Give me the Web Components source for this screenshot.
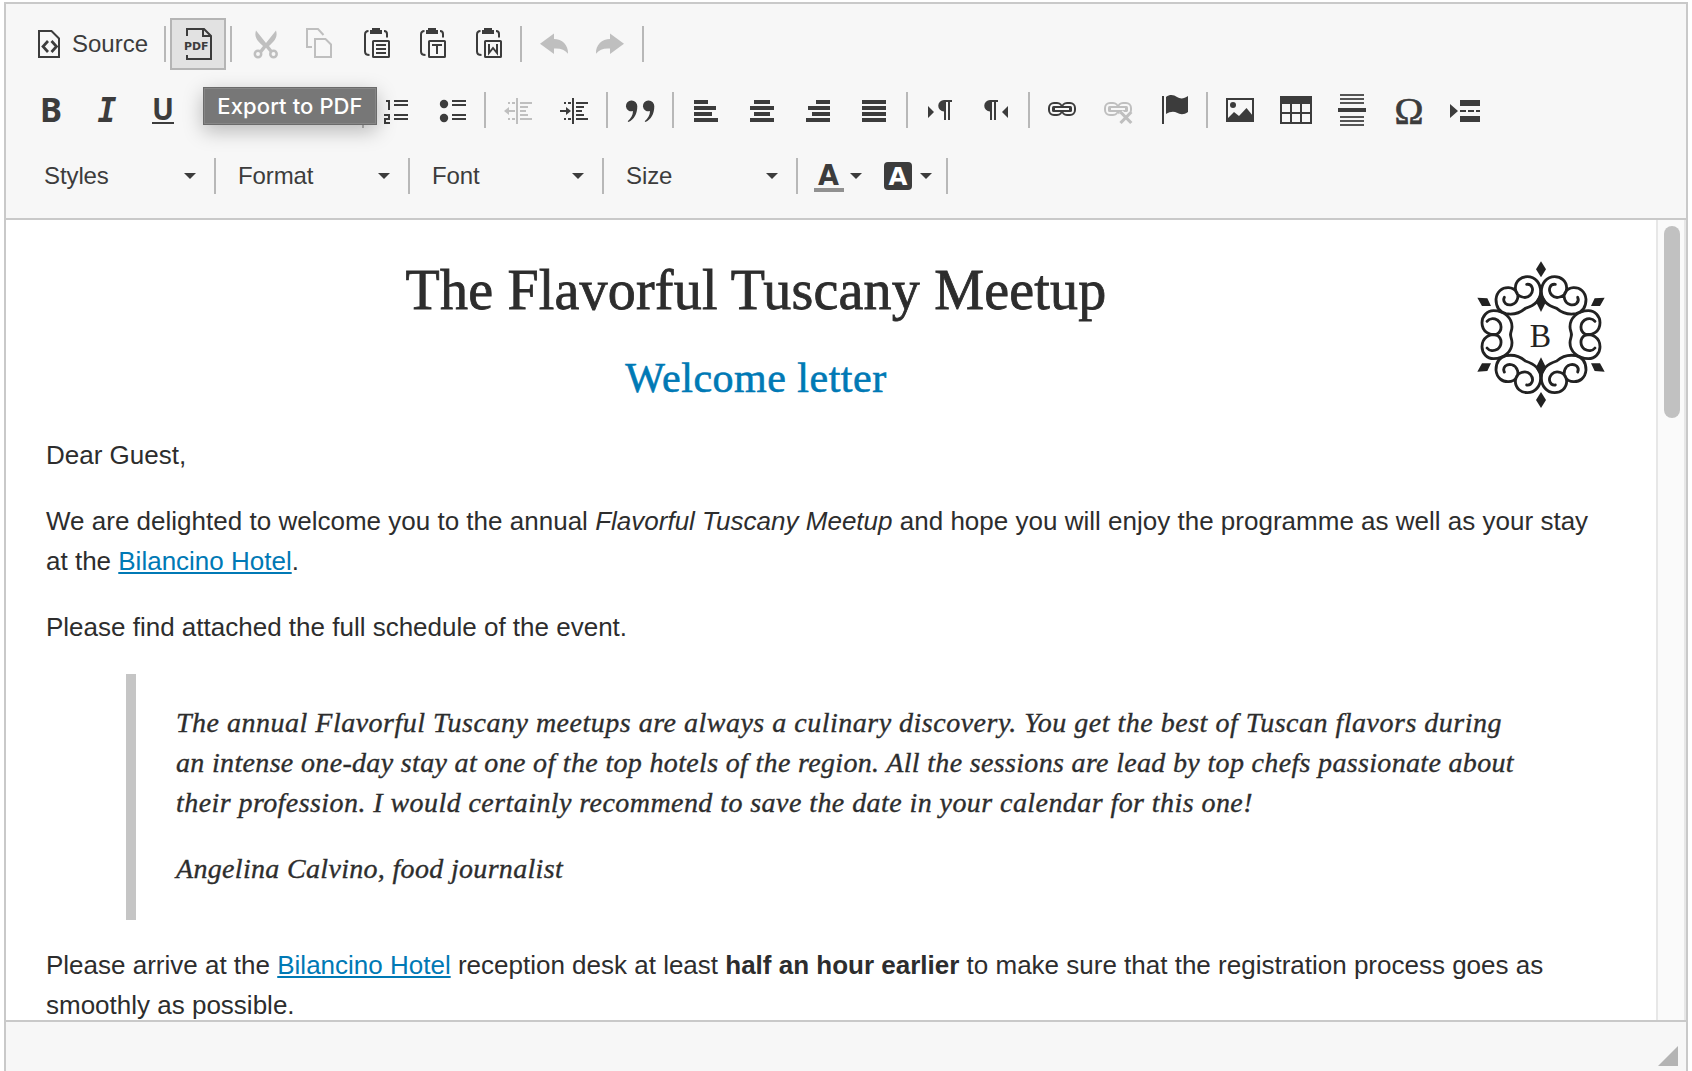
<!DOCTYPE html>
<html lang="en">
<head>
<meta charset="utf-8">
<title>Rich text editor</title>
<style>
html, body { margin: 0; height: 100%; overflow: hidden; background: #fff; }
body { font-family: "Liberation Sans", Arial, sans-serif; color: #2d2d2d; }
</style>
</head>
<body>
<rich-editor>
  <tool-row slot="tools">
    <tool-button icon="source" label="Source"></tool-button>
    <tool-separator></tool-separator>
    <tool-button icon="pdf" active tip="Export to PDF"></tool-button>
    <tool-separator></tool-separator>
    <tool-button icon="cut" disabled></tool-button>
    <tool-button icon="copy" disabled></tool-button>
    <tool-button icon="paste"></tool-button>
    <tool-button icon="pastetext"></tool-button>
    <tool-button icon="pasteword"></tool-button>
    <tool-separator></tool-separator>
    <tool-button icon="undo" disabled></tool-button>
    <tool-button icon="redo" disabled></tool-button>
    <tool-separator></tool-separator>
  </tool-row>
  <tool-row slot="tools">
    <tool-button icon="bold"></tool-button>
    <tool-button icon="italic"></tool-button>
    <tool-button icon="underline"></tool-button>
    <tool-button></tool-button>
    <tool-button></tool-button>
    <tool-button></tool-button>
    <tool-separator></tool-separator>
    <tool-button icon="numbered"></tool-button>
    <tool-button icon="bulleted"></tool-button>
    <tool-separator></tool-separator>
    <tool-button icon="outdent" disabled></tool-button>
    <tool-button icon="indent"></tool-button>
    <tool-separator></tool-separator>
    <tool-button icon="quote"></tool-button>
    <tool-separator></tool-separator>
    <tool-button icon="left"></tool-button>
    <tool-button icon="center"></tool-button>
    <tool-button icon="right"></tool-button>
    <tool-button icon="justify"></tool-button>
    <tool-separator></tool-separator>
    <tool-button icon="ltr"></tool-button>
    <tool-button icon="rtl"></tool-button>
    <tool-separator></tool-separator>
    <tool-button icon="link"></tool-button>
    <tool-button icon="unlink" disabled></tool-button>
    <tool-button icon="flag"></tool-button>
    <tool-separator></tool-separator>
    <tool-button icon="image"></tool-button>
    <tool-button icon="table"></tool-button>
    <tool-button icon="rule"></tool-button>
    <tool-button icon="omega"></tool-button>
    <tool-button icon="pagebreak"></tool-button>
  </tool-row>
  <tool-row slot="tools">
    <tool-combo>Styles</tool-combo>
    <tool-separator></tool-separator>
    <tool-combo>Format</tool-combo>
    <tool-separator></tool-separator>
    <tool-combo>Font</tool-combo>
    <tool-separator></tool-separator>
    <tool-combo>Size</tool-combo>
    <tool-separator></tool-separator>
    <tool-button icon="textcolor" menu></tool-button>
    <tool-button icon="bgcolor" menu></tool-button>
    <tool-separator></tool-separator>
  </tool-row>

  <letter-header slot="page">
    <text-line kind="h1" style="letter-spacing:.2px">The Flavorful Tuscany Meetup</text-line>
    <text-line kind="h2" style="letter-spacing:.5px">Welcome letter</text-line>
    <brand-logo slot="logo"></brand-logo>
  </letter-header>
  <letter-par slot="page"><text-line>Dear Guest,</text-line></letter-par>
  <letter-par slot="page">
    <text-line style="letter-spacing:.008px">We are delighted to welcome you to the annual <em>Flavorful Tuscany Meetup</em> and hope you will enjoy the programme as well as your stay</text-line>
    <text-line>at the <a>Bilancino Hotel</a>.</text-line>
  </letter-par>
  <letter-par slot="page"><text-line>Please find attached the full schedule of the event.</text-line></letter-par>
  <letter-quote slot="page">
    <letter-par>
      <text-line kind="quote" style="letter-spacing:.502px">The annual Flavorful Tuscany meetups are always a culinary discovery. You get the best of Tuscan flavors during</text-line>
      <text-line kind="quote" style="letter-spacing:.332px">an intense one-day stay at one of the top hotels of the region. All the sessions are lead by top chefs passionate about</text-line>
      <text-line kind="quote" style="letter-spacing:.431px">their profession. I would certainly recommend to save the date in your calendar for this one!</text-line>
    </letter-par>
    <letter-par><text-line kind="quote" style="letter-spacing:.32px">Angelina Calvino, food journalist</text-line></letter-par>
  </letter-quote>
  <letter-par slot="page">
    <text-line>Please arrive at the <a>Bilancino Hotel</a> reception desk at least <b>half an hour earlier</b> to make sure that the registration process goes as</text-line>
    <text-line>smoothly as possible.</text-line>
  </letter-par>
</rich-editor>

<script>
const define = (name, html) => customElements.define(name, class extends HTMLElement {
  connectedCallback() {
    if (this.shadowRoot) return;
    this.attachShadow({ mode: 'open' }).innerHTML = typeof html === 'function' ? html(this) : html;
  }
});

const pasteBase = `<path d="M10 0h8v2h2v4H8V2h2z"/><g class="l"><path d="M6.500 3Q3 3 3 6.500V23.500Q3 27 7.500 27M22 3Q25 3 25 6V9.500"/><rect x="11" y="13" width="16" height="16" rx=".6"/></g>`;
const bars = list => list.map(([x, w], i) => `<rect x="${x}" y="${6 + i * 6}" width="${w}" height="4"/>`).join('');
const dentLines = '<path class="l" d="M16 9H28M16 13H24M16 17H22M16 21H24M16 25H28"/><path d="M12 4h2v26h-2zM4 8h2v2H4zM8 8h3v2H8zM4 24h2v2H4zM8 24h3v2H8z"/>';
const chain = '<g class="l"><rect x="1" y="9" width="13" height="12" rx="5"/><rect x="14" y="9" width="13" height="12" rx="5"/></g><rect x="4" y="12" width="20" height="6" rx="1.500"/><path d="M7 15H21" stroke="#f7f7f7" stroke-width="2"/>';
const pilcrow = 'v2h-2v18h-2V8h-2v18h-2V17.500a5.700 5.700 0 0 1 0-11.500z';
const quoteMark = 'a5.600 5.600 0 0 1 5.600 5.800C11.300 20 8 25.500 2.500 28l-.8-.8C5 24.500 7 21 7 17A5.400 5.400 0 1 1 5.700 6.500z';

const icons = {
  source: '<path class="l" d="M3 3H15.500L23 10.500V29H3z"/><path d="M12 13L7 18.500L12 24M15.500 13L20.500 18.500L15.500 24" fill="none" stroke="currentColor" stroke-width="2.700"/>',
  pdf: '<path class="l" d="M5 8V1H22L29 8V31H5V27M21 1V8H29"/><text x="2" y="22" textLength="24.500" lengthAdjust="spacingAndGlyphs" font-family="DejaVu Sans" font-weight="700" font-size="11">PDF</text>',
  cut: '<path d="M6 2.500C4.300 8 6 12 13 18L9.500 22.500L12.300 24.500L16 19.800L20 24.500L22.500 22.500L19 18C26 12 27.700 8 26 2.500L16 15z"/><g class="l" style="stroke-width:2.500"><circle cx="8" cy="26" r="3.200"/><circle cx="23.500" cy="26" r="3.200"/></g>',
  copy: '<path class="l" d="M6 19H1V1H12L17.500 7M9 11H19.500L25 16.500V29H9z"/>',
  paste: pasteBase + '<path class="l" d="M14 17H24M14 21H24M14 25H24"/>',
  pastetext: pasteBase + '<path class="l" d="M14 17H24M19 17V26"/>',
  pasteword: pasteBase + '<path class="l" d="M15 16V25L19 20L23 25V16"/>',
  undo: '<path d="M0 15.700L14 5.500V11C22 11 28.500 17 28 25.700C25 21.500 20 20 14 20.500V26z"/>',
  redo: '<path transform="matrix(-1 0 0 1 28 0)" d="M0 15.700L14 5.500V11C22 11 28.500 17 28 25.700C25 21.500 20 20 14 20.500V26z"/>',
  bold: '<text x="4" y="28" textLength="22" lengthAdjust="spacingAndGlyphs" font-family="Noto Sans" font-weight="700" font-size="33.600">B</text>',
  italic: '<text x="5.500" y="28" textLength="19" lengthAdjust="spacingAndGlyphs" font-family="DejaVu Sans Mono" font-weight="700" font-style="italic" font-size="33">I</text>',
  underline: '<text x="4" y="26" textLength="22" lengthAdjust="spacingAndGlyphs" font-family="Noto Sans" font-weight="700" font-size="30">U</text><path d="M4 28h22v2H4z"/>',
  numbered: '<path class="l" transform="translate(-2 0)" d="M6 7H9V16M4 21H9V25H5V29H10M14 7H28M14 11H28M14 21H28M14 25H28"/>',
  bulleted: '<g transform="translate(-2 0)"><circle cx="8" cy="10" r="4.200"/><circle cx="8" cy="24" r="4.200"/><path class="l" d="M16 7H30M16 11H30M16 21H30M16 25H30"/></g>',
  outdent: dentLines + '<path d="M0 17L5 13V16H11V18H5V21z"/>',
  indent: dentLines + '<path d="M11 17L6 13V16H0V18H6V21z"/>',
  quote: `<path d="M5.700 6.500${quoteMark}"/><path transform="translate(17 0)" d="M5.700 6.500${quoteMark}"/>`,
  left: bars([[2, 14], [2, 22], [2, 18], [2, 24]]),
  center: bars([[6, 16], [2, 24], [6, 16], [2, 24]]),
  right: bars([[12, 14], [4, 22], [8, 18], [2, 24]]),
  justify: bars([[2, 24], [2, 24], [2, 24], [2, 24]]),
  ltr: `<path d="M2 12L8 18L2 24zM26 6${pilcrow}"/>`,
  rtl: `<path d="M26 12L20 18L26 24z"/><path transform="translate(-10 0)" d="M26 6${pilcrow}"/>`,
  link: chain,
  unlink: chain + '<path d="M16.500 18.500L27 29M27 18.500L16.500 29" stroke="#f7f7f7" stroke-width="6"/><path d="M16.500 18L27.300 29M27.300 18L16.500 29" stroke="currentColor" stroke-width="3.200"/>',
  flag: '<path d="M2 2h2v28H2zM6 3C10 0 14 1 17 3S24 5 28 2V18C24 21 20 20.500 17 18.800S10 17.500 6 20z"/>',
  image: '<path class="l" d="M1 5H27V27H1z"/><circle cx="7" cy="11" r="3"/><path d="M2 26V24L8 18L13 22L20.500 14L27 22V27H2z"/>',
  table: '<path fill-rule="evenodd" d="M-2 2H30V30H-2zM0 10V18H8V10zM10 10V18H18V10zM20 10V18H28V10zM0 20V28H8V20zM10 20V28H18V20zM20 20V28H28V20z"/>',
  rule: '<path d="M2 1H26M2 5H26M2 9H26M2 23H26M2 27H26M2 31H26" stroke="#555" stroke-width="2"/><path d="M0 14h28v4H0z"/>',
  omega: '<text x="0.500" y="29.500" textLength="29" lengthAdjust="spacingAndGlyphs" font-family="Liberation Serif" font-size="38" stroke="currentColor" stroke-width=".7">Ω</text>',
  pagebreak: '<path d="M0 10L8 17L0 24zM10 6H30V12H10zM10 22H30V28H10zM10 16h6v2h-6zM18 16h6v2h-6zM26 16h4v2h-4z"/>',
  textcolor: '<text x="6" y="24.700" textLength="21" lengthAdjust="spacingAndGlyphs" font-family="DejaVu Sans" font-weight="700" font-size="28">A</text><path fill="#919191" d="M2 28h30v4H2z"/>',
  bgcolor: '<rect x="2" y="2" width="28" height="28" rx="4"/><text x="6.500" y="25" fill="#fff" textLength="19" lengthAdjust="spacingAndGlyphs" font-family="DejaVu Sans" font-weight="700" font-size="25.500">A</text>'
};

define('rich-editor', `
<style>
:host { display: flex; flex-direction: column; box-sizing: border-box; margin: 2px 0 0 4px; width: 1684px; height: 1080px; border: 2px solid #c9c9c9; background: #f7f7f7; }
header { box-sizing: border-box; height: 216px; border-bottom: 2px solid #c9c9c9; padding-top: 7px; }
main { display: flex; height: 800px; border-bottom: 2px solid #c9c9c9; background: #fff; overflow: hidden; }
article { flex: 1; min-width: 0; padding: 24px 46px 0 40px; }
footer { display: flex; justify-content: flex-end; padding: 24px 8px 0 0; }
i { width: 20px; height: 20px; background: #b4b4b4; clip-path: polygon(100% 0, 100% 100%, 0 100%); }
</style>
<header><slot name="tools"></slot></header>
<main><article><slot name="page"></slot></article><scroll-track></scroll-track></main>
<footer><i></i></footer>`);

define('scroll-track', `
<style>
:host { display: flex; flex: none; justify-content: center; align-items: flex-start; box-sizing: border-box; width: 30px; padding: 6px 0 0 2px; border: solid #e7e7e7; border-width: 0 2px; background: #fafafa; }
i { width: 16px; height: 192px; border-radius: 8px; background: #c1c1c1; }
</style><i></i>`);

define('tool-row', `
<style>:host { display: flex; align-items: center; height: 66px; padding-left: 18px; color: #3c3c3c; }</style><slot></slot>`);

define('tool-separator', `
<style>:host { display: block; width: 2px; height: 36px; margin: 0 6px 0 2px; background: #b8b8b8; }</style>`);

define('tool-combo', `
<style>
:host { display: flex; align-items: center; justify-content: space-between; box-sizing: border-box; width: 184px; padding: 0 16px; font-size: 24px; letter-spacing: -.1px; }
:host(:first-child) { margin-left: 4px; }
i { width: 12px; height: 6px; background: currentColor; clip-path: polygon(0 0, 100% 0, 50% 100%); }
</style><slot></slot><i></i>`);

define('tool-button', el => `
<style>
:host { position: relative; display: flex; align-items: center; box-sizing: border-box; flex: none; width: 56px; height: 52px; padding-left: 12px; font-size: 24px; }
:host([label]) { width: 138px; }
:host([menu]) { width: 70px; padding-left: 8px; }
:host([disabled]) { color: #bfbfbf; }
:host([active]) { padding-left: 10px; margin: 0 2px 0 -2px; border: 2px solid #b5b5b5; background: #e2e2e2; }
svg { flex: none; width: 32px; height: 32px; overflow: visible; fill: currentColor; }
.l { fill: none; stroke: currentColor; stroke-width: 2; }
span { margin-left: 4px; }
i { width: 12px; height: 6px; margin-left: 6px; background: currentColor; clip-path: polygon(0 0, 100% 0, 50% 100%); }
b { position: absolute; z-index: 2; left: 31px; top: 67px; box-sizing: border-box; width: 174px; height: 38px; border: 1px solid #6b6b6b; background: #777; box-shadow: 0 6px 20px rgba(0,0,0,.26), inset 0 0 0 1px #868686; color: #fff; font: 500 22px/36px Inter, sans-serif; letter-spacing: .1px; text-align: center; white-space: nowrap; }
</style>
<svg viewBox="0 0 32 32">${icons[el.getAttribute('icon')] || ''}</svg>
${el.hasAttribute('label') ? `<span>${el.getAttribute('label')}</span>` : ''}
${el.hasAttribute('menu') ? '<i></i>' : ''}
${el.hasAttribute('tip') ? `<b>${el.getAttribute('tip')}</b>` : ''}`);

define('letter-header', `
<style>
:host { display: flex; height: 191px; }
div { flex: none; width: 1420px; }
</style><div><slot></slot></div><slot name="logo"></slot>`);

define('letter-par', `<style>:host { display: block; margin-bottom: 26px; }</style><slot></slot>`);

define('letter-quote', `
<style>:host { display: block; box-sizing: border-box; height: 246px; margin: 27px 80px 25px; padding: 29px 40px 0; border-left: 10px solid #c5c5c5; }</style><slot></slot>`);

define('text-line', `
<style>
:host { display: block; height: 40px; line-height: 40px; font-size: 26px; white-space: nowrap; }
:host([kind=h1]), :host([kind=h2]), :host([kind=quote]) { font-family: "Liberation Serif", serif; -webkit-text-stroke: .35px currentColor; }
:host([kind=h1]) { height: 92px; line-height: 92px; font-size: 56px; text-align: center; -webkit-text-stroke-width: .8px; }
:host([kind=h2]) { height: 84px; line-height: 84px; font-size: 42px; text-align: center; color: #0079b5; -webkit-text-stroke-width: .6px; }
:host([kind=quote]) { font-size: 28px; font-style: italic; }
::slotted(a) { color: #0079b5; text-decoration: underline; text-decoration-thickness: 2px; text-underline-offset: 2px; }
</style><slot></slot>`);

define('brand-logo', `
<style>:host { display: block; flex: none; margin: 16px 0 0 9px; } svg { display: block; width: 132px; height: 150px; }</style>
<svg viewBox="45 150 396 450" fill="#222">
<defs>
<g id="q">
<path fill="none" stroke="#222" stroke-width="8.500" stroke-linecap="round" d="M286 223C270 221 262 240 275 255C288 269 318 262 320 235C320 212 302 200 284 200C260 200 244 220 244 245C244 276 268 288 290 295C305 308 325 315 348 311C368 306 378 290 378 268C376 245 360 232 340 233C320 234 308 252 314 268C320 286 340 288 350 280C356 274 356 268 353 262"/>
<path fill="none" stroke="#222" stroke-width="8.500" stroke-linecap="round" d="M405 334C398 325 385 324 374 330C360 340 358 362 375 372C395 380 420 365 420 338C420 318 405 302 385 302C352 302 330 325 330 350C330 362 335 366 334 374"/>
<path d="M434 263L404 265L393 288L420 288zM243 154L258 178L243 202zM243 225L248 255L259 274L243 306z"/>
</g>
<g id="h"><use href="#q"/><use href="#q" transform="matrix(-1 0 0 1 486 0)"/></g>
</defs>
<use href="#h"/><use href="#h" transform="matrix(1 0 0 -1 0 748)"/>
<text x="241" y="412" text-anchor="middle" font-family="Liberation Serif" font-size="104" textLength="64" lengthAdjust="spacingAndGlyphs">B</text>
</svg>`);
</script>
</body>
</html>
